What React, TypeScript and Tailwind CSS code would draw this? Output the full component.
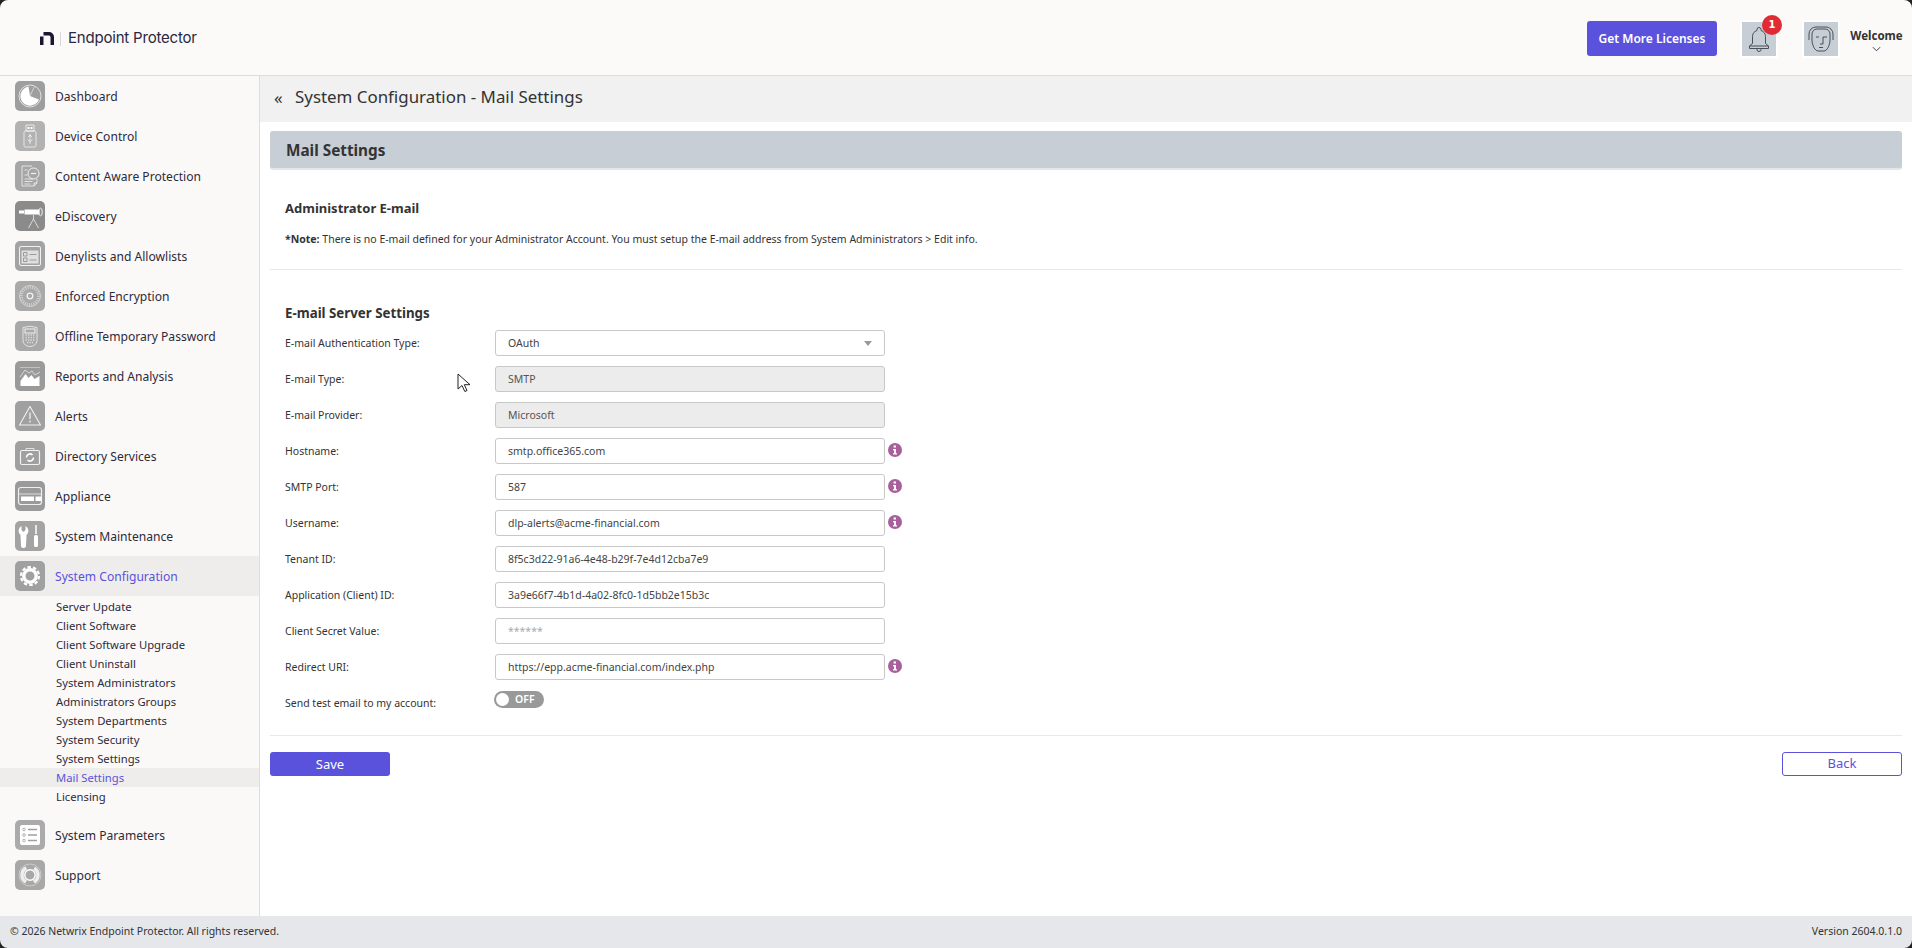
import React from "react";

const font = "font-['Noto_Sans','DejaVu_Sans',sans-serif]";

function Box({ children, tone }: { children: React.ReactNode; tone: string }) {
  return (
    <span className={`w-[30px] h-[30px] rounded-[5px] flex items-center justify-center shrink-0 ${tone}`}>
      <svg viewBox="0 0 30 30" width="30" height="30" fill="none" stroke="#fff" strokeWidth="0.8" strokeOpacity="0.85">
        {children}
      </svg>
    </span>
  );
}

const tones: Record<string, string> = {
  Dashboard: "bg-[#9e9e9e]",
  "Device Control": "bg-[#b2b2b2]",
  "Content Aware Protection": "bg-[#a6a6a6]",
  eDiscovery: "bg-[#8b8b8b]",
  "Denylists and Allowlists": "bg-[#a3a3a3]",
  "Enforced Encryption": "bg-[#a9a9a9]",
  "Offline Temporary Password": "bg-[#a8a8a8]",
  "Reports and Analysis": "bg-[#9a9a9a]",
  Alerts: "bg-[#a0a0a0]",
  "Directory Services": "bg-[#a0a0a0]",
  Appliance: "bg-[#9a9a9a]",
  "System Maintenance": "bg-[#a3a3a3]",
  "System Configuration": "bg-[#a0a0a0]",
  "System Parameters": "bg-[#ababab]",
  Support: "bg-[#a8a8a8]",
};

const icons: Record<string, React.ReactNode> = {
  Dashboard: (
    <>
      <circle cx="15" cy="15" r="11" />
      <path d="M15 15L13.500 5.600A9.600 9.600 0 1 0 24 18.500Z" fill="#fff" stroke="none" />
      <path d="M15 15L19.500 5.500" strokeOpacity="0.7" />
    </>
  ),
  "Device Control": (
    <>
      <path d="M11 4h8v6h-8z" />
      <path d="M12.500 6h2v2h-2zM15.500 6h2v2h-2z" fill="#fff" stroke="none" />
      <rect x="9" y="10" width="12" height="16" rx="1.500" />
      <path d="M15 13v10M13 16l2-2 2 2M12.500 18.500l2.500 2 2.500-2" />
    </>
  ),
  "Content Aware Protection": (
    <>
      <path d="M17 5H7v20h12l3-3v-4" />
      <circle cx="18.500" cy="12.500" r="5.500" strokeWidth="1" />
      <path d="M16 12.500h5" strokeWidth="1.200" />
      <path d="M9.500 9h3M9.500 14h3M9.500 18h8M9.500 20.500h8M9.500 23h6" />
      <path d="M19 25v-3h3" />
    </>
  ),
  eDiscovery: (
    <>
      <path d="M4 9.500h5v3H4z" fill="#fff" stroke="none" />
      <path d="M9.500 8.500h15v5h-15z" fill="#fff" stroke="none" />
      <ellipse cx="25.500" cy="11" rx="1.800" ry="3.800" strokeWidth="1" />
      <path d="M18.500 14v4M18.500 18l-5 9M18.500 18l5 9" />
    </>
  ),
  "Denylists and Allowlists": (
    <>
      <rect x="4.500" y="5.500" width="21" height="19" rx="1.500" strokeWidth="1" />
      <path d="M6.500 9.500h17v13h-17z" fill="#fff" fillOpacity="0.65" stroke="none" />
      <path d="M8.500 11.500h3.500v3.500H8.500zM8.500 17h3.500v3.500H8.500zM14.500 13.500h7M14.500 19h7" stroke="#8a8a8a" strokeOpacity="1" />
    </>
  ),
  "Enforced Encryption": (
    <>
      <circle cx="15" cy="15" r="10.500" strokeOpacity="0.6" />
      <circle cx="15" cy="15" r="8.500" strokeWidth="2.500" strokeDasharray="1 1.200" strokeOpacity="0.5" />
      <circle cx="15" cy="15" r="2.800" strokeWidth="1.300" />
    </>
  ),
  "Offline Temporary Password": (
    <>
      <path d="M8 6.500q7-2.500 14 0V20q-1.500 5.500-7 5.500T8 20z" />
      <rect x="10" y="8" width="10" height="4" strokeWidth="1" />
      <path d="M10.500 14h9M10.500 16.500h9M10.500 19h9M12 21.500h6" strokeDasharray="1.400 1.100" strokeWidth="1.500" strokeOpacity="0.6" />
    </>
  ),
  "Reports and Analysis": (
    <>
      <path d="M5 6.500h20" strokeOpacity="0.5" />
      <path d="M5.500 25v-5l5-7 3 4 3-3 3 4 5-3v10z" fill="#fff" stroke="none" />
      <path d="M5 16l5-7 4 3 3-2 3 4 5-3" strokeWidth="0.700" />
    </>
  ),
  Alerts: (
    <>
      <path d="M15 5.500L25.500 24H4.500z" strokeLinejoin="round" strokeWidth="1.100" />
      <path d="M15 11.500v6.500M15 19.500v2" strokeWidth="1.300" />
    </>
  ),
  "Directory Services": (
    <>
      <rect x="5.500" y="9.500" width="19" height="14" rx="1.500" strokeWidth="1.200" />
      <path d="M11 9.500V7.500h8v2" />
      <path d="M11.500 16.500a3.500 3.500 0 0 1 6-2.500M18.500 16.500a3.500 3.500 0 0 1-6 2.500" strokeWidth="1.600" strokeOpacity="1" />
    </>
  ),
  Appliance: (
    <>
      <rect x="3.500" y="6.500" width="23" height="17" rx="2.500" strokeWidth="1.200" />
      <path d="M4 13h22" />
      <path d="M6 15.500h13V20H6zM20.500 15.500H26V20h-5.500z" fill="#fff" stroke="none" />
    </>
  ),
  "System Maintenance": (
    <>
      <path d="M6.500 5v4l2 2 2-2V5a5.500 5.500 0 0 1 1 9l-.5 10.500a2.500 2.500 0 0 1-5 0L5.500 14a5.500 5.500 0 0 1 1-9z" fill="#fff" stroke="none" />
      <path d="M21 4v9" strokeWidth="1.500" strokeOpacity="1" />
      <rect x="19" y="14" width="4" height="12" rx="1.500" fill="#fff" stroke="none" />
    </>
  ),
  "System Configuration": (
    <>
      <circle cx="15" cy="15" r="9" strokeWidth="2.200" strokeDasharray="3.500 2.150" strokeOpacity="1" />
      <circle cx="15" cy="15" r="6.200" strokeWidth="3.400" strokeOpacity="1" />
    </>
  ),
  "System Parameters": (
    <>
      <rect x="5" y="5" width="20" height="20" rx="2" fill="#fff" stroke="none" />
      <path d="M13 9.500h9M13 15h9M13 20.500h9" stroke="#a0a0a0" strokeOpacity="1" strokeWidth="1.500" />
      <circle cx="9" cy="9.500" r="1.300" stroke="#a0a0a0" strokeOpacity="1" />
      <circle cx="9" cy="15" r="1.300" stroke="#a0a0a0" strokeOpacity="1" />
      <circle cx="9" cy="20.500" r="1.300" stroke="#a0a0a0" strokeOpacity="1" />
    </>
  ),
  Support: (
    <>
      <circle cx="15" cy="15" r="11" strokeOpacity="0.5" />
      <circle cx="15" cy="15" r="8" strokeWidth="3.500" strokeDasharray="17 8.130" strokeDashoffset="8.500" strokeOpacity="0.8" />
      <circle cx="15" cy="15" r="5.200" strokeWidth="1.400" strokeOpacity="1" />
    </>
  ),
};

const top = [
  "Dashboard",
  "Device Control",
  "Content Aware Protection",
  "eDiscovery",
  "Denylists and Allowlists",
  "Enforced Encryption",
  "Offline Temporary Password",
  "Reports and Analysis",
  "Alerts",
  "Directory Services",
  "Appliance",
  "System Maintenance",
];

const sub = [
  "Server Update",
  "Client Software",
  "Client Software Upgrade",
  "Client Uninstall",
  "System Administrators",
  "Administrators Groups",
  "System Departments",
  "System Security",
  "System Settings",
  "Mail Settings",
  "Licensing",
];

function NavRow({ label, active = false }: { label: string; active?: boolean }) {
  return (
    <div className={`h-10 flex items-center pl-[15px] gap-[10px] ${active ? "bg-[#efedeb]" : ""}`}>
      <Box tone={tones[label]}>{icons[label]}</Box>
      <span className={`text-[12.1px] mt-[2px] ${active ? "text-[#5a52dc]" : "text-[#2d2a3a]"}`}>{label}</span>
    </div>
  );
}

function Info() {
  return (
    <svg viewBox="0 0 14 14" width="14" height="14" className="shrink-0">
      <circle cx="7" cy="7" r="7" fill="#a8609b" />
      <path d="M5.600 2.500h2.400v2.100H5.600zM5 6h3v4.200h1v1.300H5v-1.300h1V7.300H5z" fill="#fff" />
    </svg>
  );
}

function Field({
  label,
  value,
  disabled = false,
  select = false,
  info = false,
  muted = false,
}: {
  label: string;
  value: string;
  disabled?: boolean;
  select?: boolean;
  info?: boolean;
  muted?: boolean;
}) {
  return (
    <div className="h-9 flex items-center">
      <div className="w-[225px] pl-[15px] pt-[2px] text-[10.5px] text-[#333] shrink-0">{label}</div>
      <div
        className={`w-[390px] h-[26px] rounded-[3px] border border-[#c8c8c8] pl-3 pr-3 flex items-center text-[10.5px] justify-between ${
          disabled ? "bg-[#ececec] text-[#555]" : "bg-white text-[#444]"
        }`}
      >
        <span className={`pt-[1px] ${muted ? "text-[#aaa]" : ""}`}>{value}</span>
        {select && <span className="w-0 h-0 border-x-[4px] border-x-transparent border-t-[5px] border-t-[#999]" />}
      </div>
      {info && (
        <span className="ml-[3px] -mt-[3px]">
          <Info />
        </span>
      )}
    </div>
  );
}

export default function App() {
  return (
    <div className={`relative w-[1912px] h-[948px] overflow-hidden flex flex-col bg-white ${font}`}>
      <header className="h-[76px] shrink-0 bg-[#fbfaf8] border-b border-[#dcdce4] flex items-center pl-[40px] pr-[10px] pt-[2px]">
        <svg viewBox="0 0 14 13" width="14" height="13" className="shrink-0">
          <path d="M0 4.500h3.500V13H0zM3.500 0H9a5 5 0 0 1 5 5v8h-3.500V5A1.500 1.500 0 0 0 9 3.500H3.500z" fill="#1a1633" />
        </svg>
        <span className="w-px h-[14px] bg-[#d8d8dc] ml-[6px] mr-[7px]" />
        <span className="font-['Inter',sans-serif] text-[15px] text-[#2a2740] tracking-[-0.2px]">Endpoint Protector</span>
        <div className="ml-auto flex items-center">
          <button className="w-[130px] h-[35px] rounded-[3px] bg-[#5a52dc] text-white text-[12px] font-semibold pt-[1px]">
            Get More Licenses
          </button>
          <div className="relative ml-[23px] w-[38px] h-[38px] bg-[#c7ced5] border-2 border-white flex items-center justify-center">
            <svg viewBox="0 0 24 26" width="24" height="26" fill="none" stroke="#4a4f57" strokeWidth="1">
              <path d="M12 1.500a2 2 0 0 1 2 2v1a6.500 6.500 0 0 1 4.500 6v7l3 2.500v2.500h-19V20l3-2.500v-7a6.500 6.500 0 0 1 4.500-6v-1a2 2 0 0 1 2-2zM2.500 20h19M10 23v.5a2 2 0 0 0 4 0V23" />
            </svg>
            <span className="absolute -top-[7px] -right-[6px] w-5 h-5 rounded-full bg-[#e02b35] text-white text-[10px] font-bold flex items-center justify-center font-['DejaVu_Sans',sans-serif]">
              1
            </span>
          </div>
          <div className="ml-[24px] w-[38px] h-[38px] bg-[#c7ced5] border-2 border-white flex items-center justify-center">
            <svg viewBox="0 0 28 28" width="28" height="28" fill="none" stroke="#4a4f57" strokeWidth="1">
              <path d="M2 15V9a7 7 0 0 1 7-7h10a7 7 0 0 1 7 7v6" />
              <path d="M5 12V9a5 5 0 0 1 5-5h8a5 5 0 0 1 5 5v6c0 5-3 11-6 11h-6c-3 0-6-6-6-11z" />
              <path d="M9 12h3M16 12h4M16 12v7h-3M12 22.500h4" />
            </svg>
          </div>
          <div className="ml-[11px] w-[51px] flex flex-col items-center pt-[2px]">
            <span className="text-[11.5px] font-bold text-[#333] leading-[16px] whitespace-nowrap">Welcome</span>
            <svg viewBox="0 0 10 6" width="9" height="6" fill="none" stroke="#2a2740" strokeWidth="1" className="mt-[2px]">
              <path d="M1 1l4 4 4-4" />
            </svg>
          </div>
        </div>
      </header>

      <div className="flex-1 flex min-h-0">
        <aside className="w-[260px] shrink-0 bg-[#fbf9f8] border-r border-[#dcdce4]">
          {top.map((t) => (
            <NavRow key={t} label={t} />
          ))}
          <NavRow label="System Configuration" active />
          <div className="pt-[1px]">
            {sub.map((s) => (
              <div
                key={s}
                className={`h-[19px] pl-[56px] pt-[1px] flex items-center text-[11.25px] ${
                  s === "Mail Settings" ? "bg-[#efedeb] text-[#5a52dc]" : "text-[#2d2a3a]"
                }`}
              >
                {s}
              </div>
            ))}
          </div>
          <div className="pt-[9px]">
            <NavRow label="System Parameters" />
            <NavRow label="Support" />
          </div>
        </aside>

        <main className="flex-1 min-w-0 bg-white flex flex-col">
          <div className="h-[46px] shrink-0 bg-[#f1f1f1] flex items-center pl-[14px] pb-[4px]">
            <span className="text-[17px] text-[#333] w-[21px] leading-none">«</span>
            <span className="text-[16.9px] text-[#333]">System Configuration - Mail Settings</span>
          </div>
          <section className="px-[10px] pt-[9px]">
            <div className="h-[39px] rounded-[3px] bg-[#c7ced5] border-b-2 border-[#e3e6ea] flex items-center pl-[16px] pt-[2px] text-[15.3px] font-bold text-[#333]">
              Mail Settings
            </div>
            <h3 className="pl-[15px] mt-[29px] text-[13px] font-bold text-[#333] leading-[18px]">Administrator E-mail</h3>
            <p className="pl-[15px] mt-[13px] text-[10.5px] text-[#333] leading-[18px]">
              <b>*Note:</b> There is no E-mail defined for your Administrator Account. You must setup the E-mail address from System
              Administrators &gt; Edit info.
            </p>
            <hr className="mt-[21px] border-[#e8e8e8]" />
            <h3 className="pl-[15px] mt-[34px] text-[13.3px] font-bold text-[#333] leading-[18px]">E-mail Server Settings</h3>
            <div className="mt-[3px]">
              <Field label="E-mail Authentication Type:" value="OAuth" select />
              <Field label="E-mail Type:" value="SMTP" disabled />
              <Field label="E-mail Provider:" value="Microsoft" disabled />
              <Field label="Hostname:" value="smtp.office365.com" info />
              <Field label="SMTP Port:" value="587" info />
              <Field label="Username:" value="dlp-alerts@acme-financial.com" info />
              <Field label="Tenant ID:" value="8f5c3d22-91a6-4e48-b29f-7e4d12cba7e9" />
              <Field label="Application (Client) ID:" value="3a9e66f7-4b1d-4a02-8fc0-1d5bb2e15b3c" />
              <Field label="Client Secret Value:" value="******" muted />
              <Field label="Redirect URI:" value="https://epp.acme-financial.com/index.php" info />
              <div className="h-9 flex items-center">
                <div className="w-[224px] pl-[15px] pt-[2px] text-[10.5px] text-[#333] shrink-0">Send test email to my account:</div>
                <div className="w-[50px] h-[17px] rounded-full bg-[#999] flex items-center pl-[2px] gap-[6px] -mt-[8px]">
                  <span className="w-[13px] h-[13px] rounded-full bg-white" />
                  <span className="text-[10.5px] font-semibold text-white leading-none">OFF</span>
                </div>
              </div>
            </div>
            <hr className="mt-[14px] border-[#e8e8e8]" />
            <div className="mt-[16px] flex justify-between">
              <button className="w-[120px] h-[24px] rounded-[3px] bg-[#5a52dc] text-white text-[13px] pt-[1px]">Save</button>
              <button className="w-[120px] h-[24px] rounded-[3px] border border-[#5a52dc] bg-white text-[#5a52dc] text-[13px]">
                Back
              </button>
            </div>
          </section>
        </main>
      </div>

      <footer className="h-[32px] shrink-0 bg-[#e5e7eb] flex items-center justify-between pl-[10px] pr-[10px] text-[10.5px] text-[#333]">
        <span>© 2026 Netwrix Endpoint Protector. All rights reserved.</span>
        <span>Version 2604.0.1.0</span>
      </footer>

      <svg viewBox="0 0 14 20" width="14" height="20" className="absolute left-[457px] top-[373px]">
        <path d="M1 1v15l4-3.500 2.800 6 2.200-1-2.700-5.800H13z" fill="#fff" stroke="#222" strokeWidth="1" />
      </svg>
      <svg viewBox="0 0 8 8" width="8" height="8" className="absolute left-0 top-0">
        <path d="M0 0h8A8 8 0 0 0 0 8z" fill="#222" />
      </svg>
      <svg viewBox="0 0 8 8" width="8" height="8" className="absolute right-0 top-0">
        <path d="M8 0H0a8 8 0 0 1 8 8z" fill="#222" />
      </svg>
      <svg viewBox="0 0 8 8" width="8" height="8" className="absolute left-0 bottom-0">
        <path d="M0 8h8A8 8 0 0 1 0 0z" fill="#222" />
      </svg>
      <svg viewBox="0 0 8 8" width="8" height="8" className="absolute right-0 bottom-0">
        <path d="M8 8H0a8 8 0 0 0 8-8z" fill="#222" />
      </svg>
    </div>
  );
}
